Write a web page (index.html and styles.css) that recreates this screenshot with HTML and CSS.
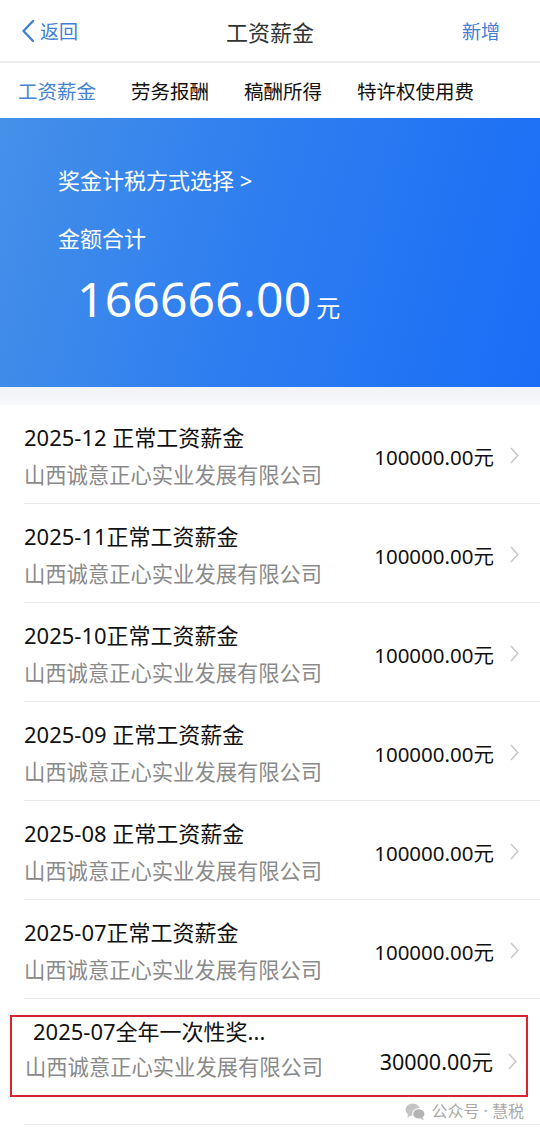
FILE: index.html
```html
<!DOCTYPE html>
<html>
  <head>
    <meta charset="UTF-8" />
    <title>工资薪金</title>
    <link rel="stylesheet" href="styles.css">
  </head>
  <body>
    <header class="navbar">
      <a class="nav-back" href="#">
        <svg width="14" height="24" viewBox="0 0 14 24"><path d="M12 2 L2.5 12 L12 22" fill="none" stroke="#3f80d4" stroke-width="2.4" stroke-linecap="round" stroke-linejoin="round"/></svg>
        <span>返回</span>
      </a>
      <h1 class="nav-title">工资薪金</h1>
      <a class="nav-action" href="#">新增</a>
    </header>

    <nav class="tabs">
      <span class="tab active">工资薪金</span>
      <span class="tab">劳务报酬</span>
      <span class="tab">稿酬所得</span>
      <span class="tab">特许权使用费</span>
    </nav>

    <section class="banner">
      <div class="banner-link">奖金计税方式选择 &gt;</div>
      <div class="banner-label">金额合计</div>
      <div class="banner-total">166666.00<span class="unit">元</span></div>
    </section>

    <div class="spacer"></div>

    <ul class="records">
      <li class="record">
        <div class="record-main">
          <div class="record-title">2025-12 正常工资薪金</div>
          <div class="record-company">山西诚意正心实业发展有限公司</div>
        </div>
        <div class="record-amount">100000.00元</div>
        <svg class="chev" width="9" height="17" viewBox="0 0 9 17"><path d="M1 1 L7.8 8.5 L1 16" fill="none" stroke="#c8c8c8" stroke-width="1.5"/></svg>
      </li>
      <li class="record">
        <div class="record-main">
          <div class="record-title">2025-11正常工资薪金</div>
          <div class="record-company">山西诚意正心实业发展有限公司</div>
        </div>
        <div class="record-amount">100000.00元</div>
        <svg class="chev" width="9" height="17" viewBox="0 0 9 17"><path d="M1 1 L7.8 8.5 L1 16" fill="none" stroke="#c8c8c8" stroke-width="1.5"/></svg>
      </li>
      <li class="record">
        <div class="record-main">
          <div class="record-title">2025-10正常工资薪金</div>
          <div class="record-company">山西诚意正心实业发展有限公司</div>
        </div>
        <div class="record-amount">100000.00元</div>
        <svg class="chev" width="9" height="17" viewBox="0 0 9 17"><path d="M1 1 L7.8 8.5 L1 16" fill="none" stroke="#c8c8c8" stroke-width="1.5"/></svg>
      </li>
      <li class="record">
        <div class="record-main">
          <div class="record-title">2025-09 正常工资薪金</div>
          <div class="record-company">山西诚意正心实业发展有限公司</div>
        </div>
        <div class="record-amount">100000.00元</div>
        <svg class="chev" width="9" height="17" viewBox="0 0 9 17"><path d="M1 1 L7.8 8.5 L1 16" fill="none" stroke="#c8c8c8" stroke-width="1.5"/></svg>
      </li>
      <li class="record">
        <div class="record-main">
          <div class="record-title">2025-08 正常工资薪金</div>
          <div class="record-company">山西诚意正心实业发展有限公司</div>
        </div>
        <div class="record-amount">100000.00元</div>
        <svg class="chev" width="9" height="17" viewBox="0 0 9 17"><path d="M1 1 L7.8 8.5 L1 16" fill="none" stroke="#c8c8c8" stroke-width="1.5"/></svg>
      </li>
      <li class="record">
        <div class="record-main">
          <div class="record-title">2025-07正常工资薪金</div>
          <div class="record-company">山西诚意正心实业发展有限公司</div>
        </div>
        <div class="record-amount">100000.00元</div>
        <svg class="chev" width="9" height="17" viewBox="0 0 9 17"><path d="M1 1 L7.8 8.5 L1 16" fill="none" stroke="#c8c8c8" stroke-width="1.5"/></svg>
      </li>
      <li class="record-marked">
        <div class="marked-box">
          <div class="record-main">
            <div class="record-title">2025-07全年一次性奖...</div>
            <div class="record-company">山西诚意正心实业发展有限公司</div>
          </div>
          <div class="record-amount">30000.00元</div>
          <svg class="chev" width="9" height="17" viewBox="0 0 9 17"><path d="M1 1 L7.8 8.5 L1 16" fill="none" stroke="#c8c8c8" stroke-width="1.5"/></svg>
        </div>
        <div class="watermark">
          <svg width="21" height="19" viewBox="0 0 22 20">
            <ellipse cx="8" cy="8" rx="7.5" ry="6.5" fill="#c4c4c4"/>
            <path d="M3 13 L2.5 16.5 L6.5 14 Z" fill="#c4c4c4"/>
            <ellipse cx="14.5" cy="12.5" rx="6.5" ry="5.5" fill="#b4b4b4" stroke="#fff" stroke-width="1.2"/>
            <path d="M18.5 16.5 L20 19 L16 17.5 Z" fill="#b4b4b4"/>
          </svg>
          <span>公众号 · 慧税</span>
        </div>
      </li>
    </ul>
  </body>
</html>
```

FILE: styles.css
```css
* {
  box-sizing: border-box;
}
body {
  margin: 0;
  width: 540px;
  font-family: "Noto Sans", "Noto Sans CJK SC", sans-serif;
  background-color: #fff;
  color: #111;
}
a {
  text-decoration: none;
}

/* top bar */
.navbar {
  height: 63px;
  display: flex;
  align-items: center;
  justify-content: space-between;
  padding: 0 40px 0 21px;
  border-bottom: 2px solid #ededed;
  position: relative;
}
.nav-back {
  display: flex;
  align-items: center;
  gap: 5px;
  color: #3f80d4;
  font-size: 19px;
}
.nav-back svg {
  display: block;
}
.nav-title {
  margin: 0;
  font-size: 22px;
  font-weight: normal;
  color: #333;
  position: absolute;
  left: 0;
  right: 0;
  text-align: center;
  pointer-events: none;
}
.nav-action {
  color: #3f80d4;
  font-size: 19px;
}

/* tabs */
.tabs {
  height: 55px;
  display: flex;
  align-items: center;
  gap: 35px;
  padding-left: 18px;
  font-size: 19.5px;
  color: #111;
}
.tab.active {
  color: #4684d2;
}

/* blue summary */
.banner {
  height: 269px;
  padding: 48px 0 0 58px;
  color: #fff;
  background: linear-gradient(105deg, #4590e8 0%, #2f7ef0 45%, #1a6df6 100%);
}
.banner-link {
  font-size: 22px;
  line-height: 28px;
}
.banner-label {
  font-size: 22px;
  line-height: 28px;
  margin-top: 30px;
}
.banner-total {
  margin-top: 17px;
  padding-left: 19px;
  font-size: 48px;
  line-height: 60px;
  letter-spacing: 0.2px;
}
.banner-total .unit {
  font-size: 24px;
  margin-left: 5px;
}

.spacer {
  height: 18px;
  background: linear-gradient(#f1f3f6, #f7f8fa);
}

/* list */
.records {
  list-style: none;
  margin: 0;
  padding: 0;
}
.record {
  height: 99px;
  display: flex;
  align-items: center;
  padding: 2px 21px 0 24px;
  position: relative;
}
.record::after {
  content: "";
  position: absolute;
  left: 24px;
  right: 0;
  bottom: 0;
  height: 1px;
  background: #ebebeb;
}
.record-main {
  flex: 1;
  display: flex;
  flex-direction: column;
  gap: 10px;
}
.record-title {
  font-size: 22px;
  line-height: 28px;
  color: #111;
}
.record-company {
  font-size: 21.3px;
  line-height: 28px;
  color: #8a8a8a;
  white-space: nowrap;
}
.record-amount {
  font-size: 20.5px;
  color: #111;
  margin-right: 16px;
}
.chev {
  display: block;
  flex: none;
}

/* highlighted record */
.record-marked {
  height: 126px;
  padding-top: 16px;
  position: relative;
}
.record-marked::after {
  content: "";
  position: absolute;
  left: 24px;
  right: 0;
  bottom: 0;
  height: 1px;
  background: #ebebeb;
}
.marked-box {
  margin-left: 10px;
  width: 518px;
  height: 82px;
  border: 2px solid #d8242e;
  display: flex;
  align-items: flex-end;
  padding: 0 9px 14px 13px;
}
.marked-box .record-main {
  gap: 8px;
}
.marked-box .record-title {
  padding-left: 8px;
}
.marked-box .record-amount {
  font-size: 21.5px;
  margin-right: 15px;
  line-height: 28px;
  padding-bottom: 5px;
}
.marked-box .chev {
  margin-bottom: 11px;
}
.watermark {
  display: flex;
  align-items: center;
  justify-content: flex-end;
  gap: 5px;
  padding-right: 16px;
  margin-top: 3px;
  font-size: 16px;
  line-height: 22px;
  color: #a8a8a8;
}
```
